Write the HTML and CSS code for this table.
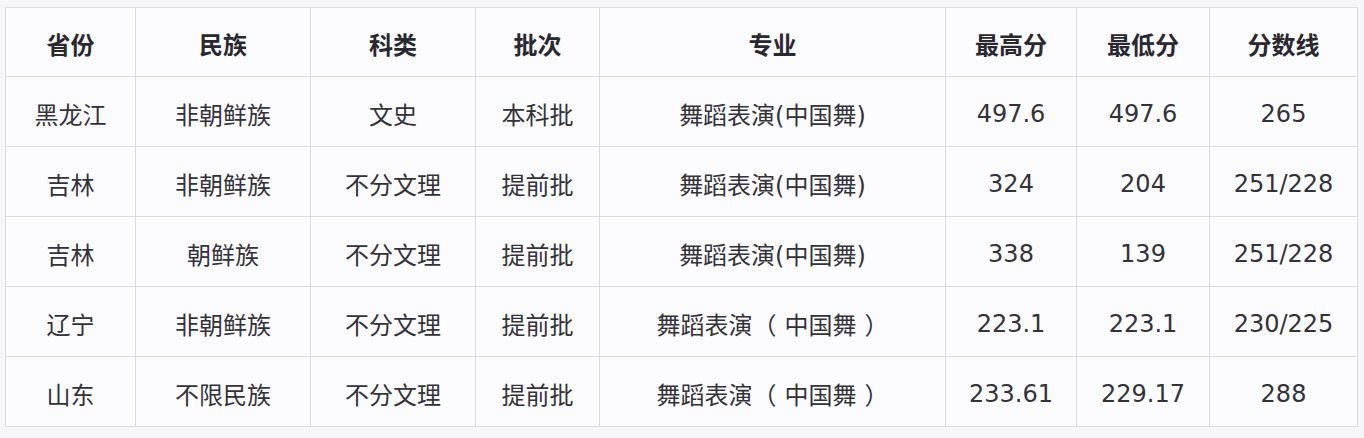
FILE: index.html
```html
<!DOCTYPE html>
<html lang="zh">
<head>
<meta charset="utf-8">
<link rel="stylesheet" href="styles.css">
</head>
<body>
<div class="wrap">
<table class="score-table">
  <colgroup>
    <col class="c1"><col class="c2"><col class="c3"><col class="c4"><col class="c5"><col class="c6"><col class="c7"><col class="c8">
  </colgroup>
  <thead>
    <tr><th>省份</th><th>民族</th><th>科类</th><th>批次</th><th>专业</th><th>最高分</th><th>最低分</th><th>分数线</th></tr>
  </thead>
  <tbody>
    <tr><td>黑龙江</td><td>非朝鲜族</td><td>文史</td><td>本科批</td><td>舞蹈表演(中国舞)</td><td>497.6</td><td>497.6</td><td>265</td></tr>
    <tr><td>吉林</td><td>非朝鲜族</td><td>不分文理</td><td>提前批</td><td>舞蹈表演(中国舞)</td><td>324</td><td>204</td><td>251/228</td></tr>
    <tr><td>吉林</td><td>朝鲜族</td><td>不分文理</td><td>提前批</td><td>舞蹈表演(中国舞)</td><td>338</td><td>139</td><td>251/228</td></tr>
    <tr><td>辽宁</td><td>非朝鲜族</td><td>不分文理</td><td>提前批</td><td>舞蹈表演<span class="po">（</span>中国舞<span class="pc">）</span></td><td>223.1</td><td>223.1</td><td>230/225</td></tr>
    <tr><td>山东</td><td>不限民族</td><td>不分文理</td><td>提前批</td><td>舞蹈表演<span class="po">（</span>中国舞<span class="pc">）</span></td><td>233.61</td><td>229.17</td><td>288</td></tr>
  </tbody>
</table>
</div>
</body>
</html>
```
FILE: styles.css
```css
html, body {
  margin: 0;
  padding: 0;
  background: #f6f6f8;
}
.wrap {
  padding: 7px 0 0 5px;
}
.score-table {
  border-collapse: collapse;
  table-layout: fixed;
  width: 1352px;
  background: #fcfcfe;
  font-family: "DejaVu Sans", "Noto Sans CJK SC", sans-serif;
  font-size: 24px;
  color: #34323a;
}
.c1 { width: 130px; }
.c2 { width: 175px; }
.c3 { width: 165px; }
.c4 { width: 124px; }
.c5 { width: 346px; }
.c6 { width: 131px; }
.c7 { width: 133px; }
.c8 { width: 148px; }
.score-table th,
.score-table td {
  border: 1px solid #dcdce0;
  text-align: center;
  vertical-align: middle;
  padding: 0;
  box-sizing: border-box;
}
.score-table th {
  font-family: "Noto Sans CJK SC", sans-serif;
  font-weight: 700;
  color: #2a2830;
  height: 69px;
  padding-top: 2px;
}
.score-table td {
  height: 70px;
  padding-top: 4px;
}
.po {
  margin-right: 8px;
}
.pc {
  margin-left: 8px;
}
```
